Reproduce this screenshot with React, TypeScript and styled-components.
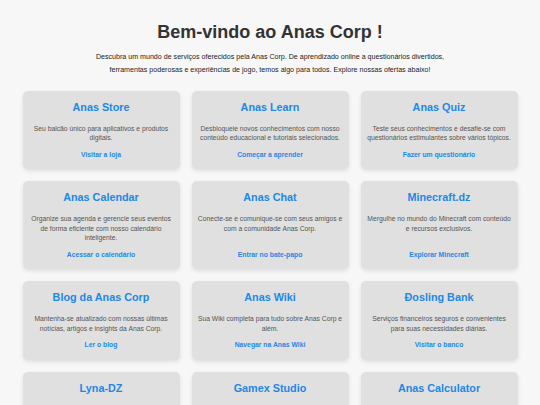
import React from 'react'
import styled, { createGlobalStyle } from 'styled-components'

interface iService {
    title: string
    text: string
    link: string
}

const services: iService[] = [
    { title: "Anas Store", text: "Seu balcão único para aplicativos e produtos digitais.", link: "Visitar a loja" },
    { title: "Anas Learn", text: "Desbloqueie novos conhecimentos com nosso conteúdo educacional e tutoriais selecionados.", link: "Começar a aprender" },
    { title: "Anas Quiz", text: "Teste seus conhecimentos e desafie-se com questionários estimulantes sobre vários tópicos.", link: "Fazer um questionário" },
    { title: "Anas Calendar", text: "Organize sua agenda e gerencie seus eventos de forma eficiente com nosso calendário inteligente.", link: "Acessar o calendário" },
    { title: "Anas Chat", text: "Conecte-se e comunique-se com seus amigos e com a comunidade Anas Corp.", link: "Entrar no bate-papo" },
    { title: "Minecraft.dz", text: "Mergulhe no mundo do Minecraft com conteúdo e recursos exclusivos.", link: "Explorar Minecraft" },
    { title: "Blog da Anas Corp", text: "Mantenha-se atualizado com nossas últimas notícias, artigos e insights da Anas Corp.", link: "Ler o blog" },
    { title: "Anas Wiki", text: "Sua Wiki completa para tudo sobre Anas Corp e além.", link: "Navegar na Anas Wiki" },
    { title: "Đosling Bank", text: "Serviços financeiros seguros e convenientes para suas necessidades diárias.", link: "Visitar o banco" },
    { title: "Lyna-DZ", text: "Descubra a Lyna-DZ, sua assistente inteligente para o dia a dia.", link: "Conhecer a Lyna" },
    { title: "Gamex Studio", text: "Jogos criativos e divertidos desenvolvidos pela nossa equipe.", link: "Jogar agora" },
    { title: "Anas Calculator", text: "Cálculos rápidos e precisos para todas as suas necessidades.", link: "Abrir a calculadora" },
]

const Card: React.FC<iService> = ({ title, text, link }) => {
    return (
        <CardBox>
            <CardTitle>{title}</CardTitle>
            <CardText>{text}</CardText>
            <CardLink href="#">{link}</CardLink>
        </CardBox>
    )
}

const App = () => {
    return (
        <>
            <GlobalStyle />
            <Page>
                <Header>
                    <Heading>Bem-vindo ao Anas Corp !</Heading>
                    <Intro>
                        Descubra um mundo de serviços oferecidos pela Anas Corp. De aprendizado online a questionários divertidos,
                        ferramentas poderosas e experiências de jogo, temos algo para todos. Explore nossas ofertas abaixo!
                    </Intro>
                </Header>
                <Grid>
                    {services.map((s) => (
                        <Card key={s.title} {...s} />
                    ))}
                </Grid>
            </Page>
        </>
    )
}

export default App

const GlobalStyle = createGlobalStyle`
html, body {
    margin: 0;
    padding: 0;
    background-color: #f7f7f7;
    font-family: "Liberation Sans", Arial, sans-serif;
    color: #333;
}
html::-webkit-scrollbar { display: none; }
`

const Page = styled.div`
width: 495px;
margin: 0 auto;
padding-top: 22px;
`

const Header = styled.div`
display: flex;
flex-direction: column;
align-items: center;
margin-bottom: 14px;
`

const Heading = styled.h1`
margin: 0 0 8px;
font-size: 18px;
line-height: 20.5px;
font-weight: 700;
color: #333;
`

const Intro = styled.p`
margin: 0;
max-width: 362px;
font-size: 7.1px;
line-height: 13px;
text-align: center;
color: #222;
`

const Grid = styled.div`
display: grid;
grid-template-columns: repeat(3, 1fr);
gap: 12px;
`

const CardBox = styled.div`
display: flex;
flex-direction: column;
align-items: center;
padding: 10px 5.5px;
background-color: #e0e0e0;
border-radius: 5px;
box-shadow: 0 2px 4px rgba(0, 0, 0, 0.1);
text-align: center;
`

const CardTitle = styled.h2`
margin: 0 0 10.6px;
font-size: 10.8px;
line-height: 12.4px;
font-weight: 700;
color: #1e88e5;
`

const CardText = styled.p`
flex: 1;
margin: 0 0 7px;
font-size: 6.75px;
line-height: 9.5px;
color: #555;
`

const CardLink = styled.a`
font-size: 6.8px;
line-height: 9.5px;
font-weight: 700;
color: #1e88e5;
text-decoration: none;
`
